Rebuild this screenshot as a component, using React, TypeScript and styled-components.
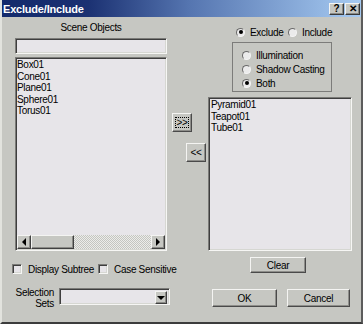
import styled, { createGlobalStyle } from "styled-components";

const font = `"Liberation Sans", Arial, sans-serif`;
const face = "#c6c7c2";
const field = "#e7e5e9";

const GlobalStyle = createGlobalStyle`
  html, body { margin: 0; padding: 0; background: ${face}; }
  body {
    font-family: ${font};
    font-size: 10px;
    letter-spacing: -0.3px;
    color: #000;
    white-space: nowrap;
  }
`;

const Window = styled.div`
  width: 363px;
  height: 324px;
  box-sizing: border-box;
  background: ${face};
  border-left: 2px solid #e2e3de;
  border-right: 2px solid #5c5c5c;
  border-bottom: 2px solid #3c3c3c;
  display: flex;
  flex-direction: column;
  overflow: hidden;
`;

const TitleBar = styled.div`
  height: 17px;
  flex: 0 0 17px;
  display: flex;
  align-items: center;
  padding: 0 1px 0 1px;
  background: linear-gradient(to right, #132a6c 0%, #1b3172 24%, #5575b0 52%, #a7cbf2 100%);
`;

const Title = styled.span`
  flex: 1;
  color: #fff;
  font-weight: bold;
  font-size: 11px;
  letter-spacing: -0.2px;
`;

const CaptionButton = styled.span`
  box-sizing: border-box;
  width: 15px;
  height: 12px;
  margin-left: 1px;
  background: ${face};
  border: 1px solid;
  border-color: #f4f4f2 #3a3a3a #3a3a3a #f4f4f2;
  box-shadow: inset -1px -1px #8a8a86;
  font-weight: bold;
  font-size: 10px;
  line-height: 10px;
  letter-spacing: 0;
  text-align: center;
  color: #000;
`;

const Body = styled.div`
  flex: 1;
  display: flex;
  padding-left: 10px;
`;

const LeftCol = styled.div`
  width: 158px;
  display: flex;
  flex-direction: column;
`;

const MidCol = styled.div`
  width: 38px;
  display: flex;
  flex-direction: column;
  align-items: flex-start;
`;

const RightCol = styled.div`
  width: 144px;
  display: flex;
  flex-direction: column;
  align-items: flex-start;
`;

const Caption = styled.div`
  margin: 5px 0 0 3px;
  width: 152px;
  height: 12px;
  line-height: 12px;
  text-align: center;
`;

const Sunken = styled.div`
  box-sizing: border-box;
  flex-shrink: 0;
  background: ${field};
  border: 1px solid;
  border-color: #7b7b78 #f6f6f4 #f6f6f4 #7b7b78;
  box-shadow: inset 1px 1px #3e3e3e, inset -1px -1px #d6d7d2;
`;

const TextBox = styled(Sunken)`
  margin: 4px 0 0 3px;
  width: 152px;
  height: 16px;
`;

const List = styled(Sunken)<{ $w: number; $h: number; $top: number }>`
  width: ${(p) => p.$w}px;
  height: ${(p) => p.$h}px;
  margin-top: ${(p) => p.$top}px;
  padding: 1px;
  display: flex;
  flex-direction: column;
  overflow: hidden;
`;

const LeftList = styled(List)`
  margin-left: 3px;
`;

const Items = styled.div<{ $shift: number }>`
  flex: 1;
  padding-left: ${(p) => p.$shift}px;
  overflow: hidden;
`;

const Item = styled.div`
  height: 11.5px;
  line-height: 11.5px;
`;

const ScrollBar = styled.div`
  height: 14px;
  display: flex;
`;

const Raised = styled.div`
  box-sizing: border-box;
  flex-shrink: 0;
  background: ${face};
  border: 1px solid;
  border-color: #f4f4f2 #404040 #404040 #f4f4f2;
  box-shadow: inset -1px -1px #8a8a86;
`;

const ScrollButton = styled(Raised)`
  width: 14px;
  height: 14px;
  display: flex;
  align-items: center;
  justify-content: center;
`;

const Thumb = styled(Raised)`
  width: 43px;
  height: 14px;
`;

const Track = styled.div`
  flex: 1;
  background: repeating-conic-gradient(#c4c5c0 0 25%, #ececea 0 50%) 0 0 / 2px 2px;
`;

const Arrow = styled.span<{ $dir: "left" | "right" | "down" }>`
  width: 0;
  height: 0;
  border-style: solid;
  border-color: transparent;
  ${(p) =>
    p.$dir === "left"
      ? "border-width: 4px 4px 4px 0; border-right-color: #000;"
      : p.$dir === "right"
      ? "border-width: 4px 0 4px 4px; border-left-color: #000;"
      : "border-width: 4px 4px 0 4px; border-top-color: #000;"}
`;

const CheckRow = styled.div`
  margin-top: 12px;
  height: 12px;
  display: flex;
  align-items: center;
`;

const CheckBox = styled(Sunken)`
  width: 10px;
  height: 10px;
`;

const CheckLabel = styled.span<{ $w: number }>`
  flex-shrink: 0;
  margin-left: 6px;
  width: ${(p) => p.$w}px;
`;

const SelRow = styled.div`
  margin-top: 12px;
  display: flex;
  align-items: flex-start;
`;

const SelLabel = styled.div`
  width: 44px;
  line-height: 11px;
  text-align: right;
`;

const Combo = styled(Sunken)`
  margin: 1px 0 0 5px;
  width: 111px;
  height: 17px;
  padding: 2px 2px 2px 0;
  display: flex;
  justify-content: flex-end;
`;

const ComboButton = styled(Raised)`
  width: 12px;
  height: 13px;
  display: flex;
  align-items: center;
  justify-content: center;
`;

const PushButton = styled.button<{ $w: number; $h: number }>`
  box-sizing: border-box;
  flex-shrink: 0;
  width: ${(p) => p.$w}px;
  height: ${(p) => p.$h}px;
  margin: 0;
  padding: 0;
  font-family: ${font};
  font-size: 10px;
  letter-spacing: -0.3px;
  color: #000;
  background: ${face};
  border: 1px solid;
  border-color: #f4f4f2 #4a4a4a #4a4a4a #f4f4f2;
  box-shadow: inset -1px -1px #8e8e8a;
  display: flex;
  align-items: center;
  justify-content: center;
`;

const AddButton = styled(PushButton)`
  margin: 96px 0 0 2px;
  padding: 3px;
`;

const Focus = styled.span`
  flex: 1;
  align-self: stretch;
  display: flex;
  align-items: center;
  justify-content: center;
  border: 1px dotted #000;
`;

const RemoveButton = styled(PushButton)`
  margin: 11px 0 0 16px;
`;

const RadioRow = styled.div`
  margin: 9px 0 0 28px;
  height: 12px;
  display: flex;
  align-items: center;
`;

const Radio = styled.span<{ $checked?: boolean }>`
  box-sizing: border-box;
  flex-shrink: 0;
  width: 9px;
  height: 9px;
  border-radius: 50%;
  background: #ebebeb;
  border: 1px solid;
  border-color: #6a6a6a #f4f4f4 #f4f4f4 #6a6a6a;
  display: flex;
  align-items: center;
  justify-content: center;
  &::after {
    content: "";
    width: 4px;
    height: 4px;
    border-radius: 50%;
    background: ${(p) => (p.$checked ? "#000" : "transparent")};
  }
`;

const RadioLabel = styled.span<{ $w?: number }>`
  flex-shrink: 0;
  margin-left: 5px;
  width: ${(p) => (p.$w ? `${p.$w}px` : "auto")};
`;

const Group = styled.div`
  box-sizing: border-box;
  margin: 4px 0 0 24px;
  width: 100px;
  height: 50px;
  border: 1px solid #7c7c7a;
  padding: 5px 0 0 9px;
  display: flex;
  flex-direction: column;
`;

const GroupRow = styled.div`
  height: 14px;
  display: flex;
  align-items: center;
`;

const ClearButton = styled(PushButton)`
  margin: 6px 0 0 42px;
`;

const ButtonRow = styled.div`
  margin: 16px 0 0 4px;
  display: flex;
  gap: 10px;
`;

const sceneObjects = ["Box01", "Cone01", "Plane01", "Sphere01", "Torus01"];
const excluded = ["Pyramid01", "Teapot01", "Tube01"];

export default function App() {
  return (
    <>
      <GlobalStyle />
      <Window>
        <TitleBar>
          <Title>Exclude/Include</Title>
          <CaptionButton>?</CaptionButton>
          <CaptionButton>✕</CaptionButton>
        </TitleBar>
        <Body>
          <LeftCol>
            <Caption>Scene Objects</Caption>
            <TextBox />
            <LeftList $w={152} $h={194} $top={3}>
              <Items $shift={-1}>
                {sceneObjects.map((name) => (
                  <Item key={name}>{name}</Item>
                ))}
              </Items>
              <ScrollBar>
                <ScrollButton>
                  <Arrow $dir="left" />
                </ScrollButton>
                <Thumb />
                <Track />
                <ScrollButton>
                  <Arrow $dir="right" />
                </ScrollButton>
              </ScrollBar>
            </LeftList>
            <CheckRow>
              <CheckBox />
              <CheckLabel $w={70}>Display Subtree</CheckLabel>
              <CheckBox />
              <CheckLabel $w={60}>Case Sensitive</CheckLabel>
            </CheckRow>
            <SelRow>
              <SelLabel>
                Selection
                <br />
                Sets
              </SelLabel>
              <Combo>
                <ComboButton>
                  <Arrow $dir="down" />
                </ComboButton>
              </Combo>
            </SelRow>
          </LeftCol>
          <MidCol>
            <AddButton $w={20} $h={19}>
              <Focus>&gt;&gt;</Focus>
            </AddButton>
            <RemoveButton $w={20} $h={19}>
              &lt;&lt;
            </RemoveButton>
          </MidCol>
          <RightCol>
            <RadioRow>
              <Radio $checked />
              <RadioLabel $w={38}>Exclude</RadioLabel>
              <Radio />
              <RadioLabel>Include</RadioLabel>
            </RadioRow>
            <Group>
              <GroupRow>
                <Radio />
                <RadioLabel>Illumination</RadioLabel>
              </GroupRow>
              <GroupRow>
                <Radio />
                <RadioLabel>Shadow Casting</RadioLabel>
              </GroupRow>
              <GroupRow>
                <Radio $checked />
                <RadioLabel>Both</RadioLabel>
              </GroupRow>
            </Group>
            <List $w={144} $h={154} $top={5}>
              <Items $shift={1}>
                {excluded.map((name) => (
                  <Item key={name}>{name}</Item>
                ))}
              </Items>
            </List>
            <ClearButton $w={56} $h={16}>
              Clear
            </ClearButton>
            <ButtonRow>
              <PushButton $w={65} $h={18}>
                OK
              </PushButton>
              <PushButton $w={63} $h={18}>
                Cancel
              </PushButton>
            </ButtonRow>
          </RightCol>
        </Body>
      </Window>
    </>
  );
}
